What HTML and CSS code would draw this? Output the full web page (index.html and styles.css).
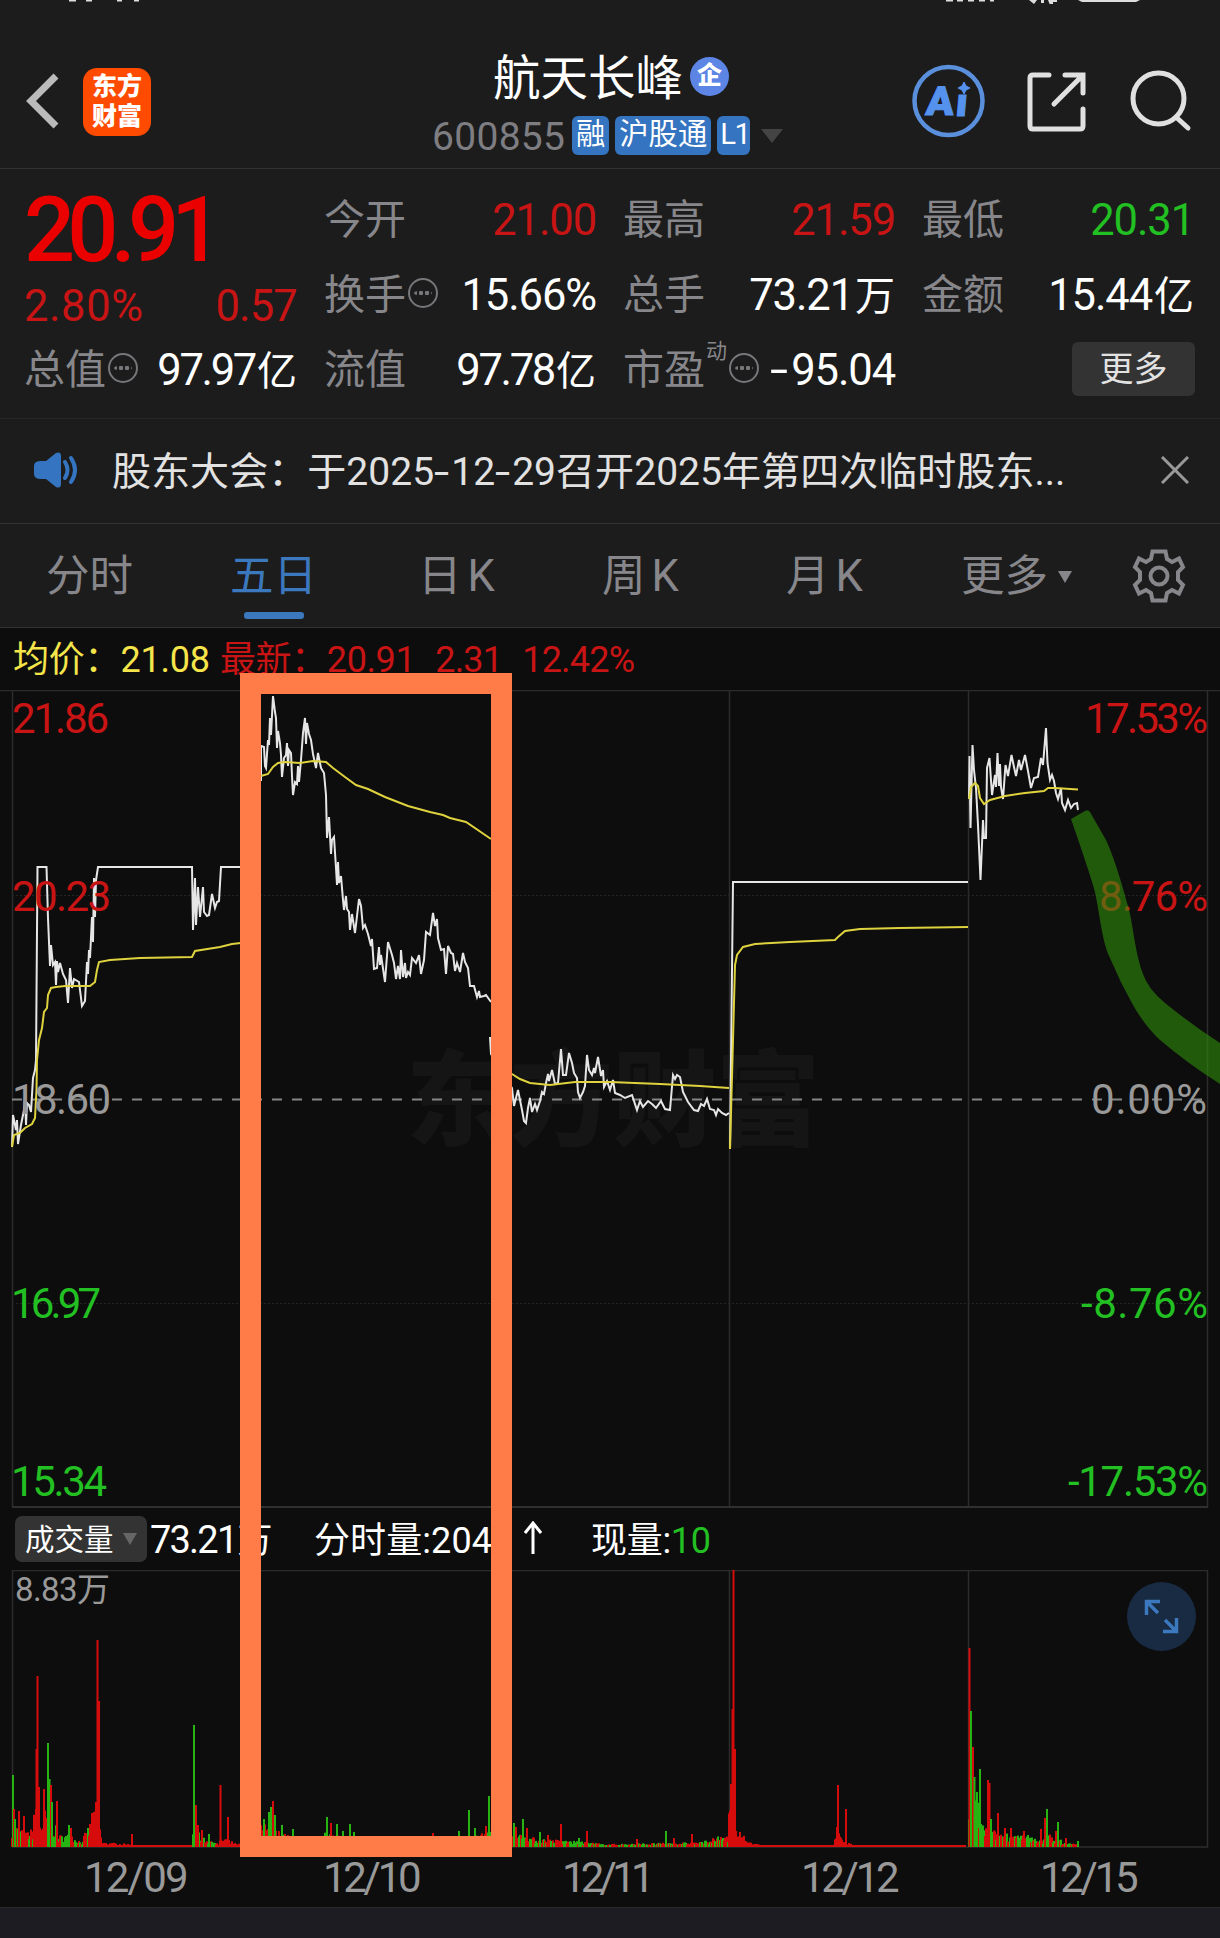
FILE: index.html
```
<!DOCTYPE html>
<html lang="zh-CN">
<head>
  <meta charset="UTF-8" />
  <meta name="viewport" content="width=device-width, initial-scale=1.0" />
  <title>航天长峰 600855</title>
  <link rel="stylesheet" href="styles.css">
</head>
<body>
  <div class="page">
    <svg class="status" viewBox="0 0 1220 4">
      <path d="M69 0h7v1.5h-7zM86 0h6v1.5h-6zM117 0h5v1.5h-5zM134 0h5v1.5h-5zM946 0h7v1.5h-7zM957 0h6v1.5h-6zM968 0h6v1.5h-6zM979 0h6v1.5h-6zM990 0h4v1.5h-4zM1029 0h8l-3 4zM1041 0h3v3h-3zM1048 0h9v2h-4v3h-3zM1078 0h62l-4 2h-54z"/>
    </svg>

    <header class="header">
      <svg class="back" viewBox="0 0 34 56"><path d="M30 3L5 28l25 25"/></svg>
      <div class="logo"><span>东方</span><span>财富</span></div>
      <div class="title">
        <div class="name">航天长峰<span class="corp">企</span></div>
        <div class="codes">
          <span class="code">600855</span>
          <span class="tag">融</span>
          <span class="tag">沪股通</span>
          <span class="tag tag-level">L1</span>
          <i class="arrow"></i>
        </div>
      </div>
      <svg class="tools" viewBox="900 60 300 84">
        <circle cx="948.500" cy="101" r="34" class="ai-ring"/>
        <g transform="translate(9 0) skewX(-5)">
          <text x="926" y="115" class="ai-text" textLength="28" lengthAdjust="spacingAndGlyphs">A</text>
          <text x="956" y="116" class="ai-text" textLength="12" lengthAdjust="spacingAndGlyphs">ı</text>
        </g>
        <path d="M964 82l2 4 4 2-4 2-2 4-2-4-4-2 4-2z" class="ai-star"/>
        <path d="M1049 75h-16q-3 0-3 3v48q0 3 3 3h47q3 0 3-3v-17M1065 75h18v18M1082 76l-28 28" class="line"/>
        <circle cx="1158.500" cy="98.500" r="25.500" class="line"/>
        <path d="M1176 117l12 11" class="line"/>
      </svg>
    </header>

    <section class="quote">
      <div class="col col-main">
        <div class="price">20.91</div>
        <div class="cell change"><span>2.80%</span><span>0.57</span></div>
        <div class="cell"><label>总值</label><i class="dots"></i><b class="tight">97.97<em>亿</em></b></div>
      </div>
      <div class="col">
        <div class="cell"><label>今开</label><b class="up">21.00</b></div>
        <div class="cell"><label>换手</label><i class="dots"></i><b>15.66%</b></div>
        <div class="cell"><label>流值</label><b class="tight">97.78<em>亿</em></b></div>
      </div>
      <div class="col">
        <div class="cell"><label>最高</label><b class="up">21.59</b></div>
        <div class="cell"><label>总手</label><b>73.21<em>万</em></b></div>
        <div class="cell"><label>市盈</label><sup>动</sup><i class="dots"></i><b class="pe"><span>-</span>95.04</b></div>
      </div>
      <div class="col">
        <div class="cell"><label>最低</label><b class="down">20.31</b></div>
        <div class="cell"><label>金额</label><b>15.44<em>亿</em></b></div>
        <div class="cell"><button class="more">更多</button></div>
      </div>
    </section>

    <section class="notice">
      <svg class="speaker" viewBox="0 0 44 36">
        <path d="M7 9h5L22 1q5-2 5 3v28q0 5-5 3L12 27H7q-7 0-7-5v-8q0-5 7-5z" class="cone"/>
        <path d="M31 10q5 8 0 16M37 6q8 12 0 24"/>
      </svg>
      <p>股东大会：于2025<s>-</s>12<s>-</s>29召开2025年第四次临时股东...</p>
      <svg class="close" viewBox="0 0 28 28"><path d="M1 1l26 26M27 1L1 27"/></svg>
    </section>

    <nav class="tabs">
      <a>分时</a>
      <a class="active">五日</a>
      <a class="tab-k">日<span>K</span></a>
      <a class="tab-k">周<span>K</span></a>
      <a class="tab-k">月<span>K</span></a>
      <a class="tab-more">更多<i></i></a>
      <svg class="gear" viewBox="-27 -27 54 54">
        <path d="M-6.500-24.500H6.500L8-17 13-14 20-17.500 24-9 19-4V4L24 9 20 17.500 13 14 8 17 6.500 24.500H-6.500L-8 17-13 14-20 17.500-24 9-19 4V-4L-24-9-20-17.500-13-14-8-17z"/>
        <circle r="8.500"/>
      </svg>
    </nav>

    <section class="chart">
      <div class="legend">
        <span class="avg">均价：<span>21.08</span></span>
        <span class="last last-price">最新：<span>20.91</span></span>
        <span class="last">2.31</span>
        <span class="last">12.42%</span>
      </div>

      <svg class="prices" viewBox="0 690 1220 818">
        <text x="406" y="1138" class="watermark" textLength="414">东方财富</text>
        <path d="M0 690.500H1220M12.500 691V1507M729.500 691V1507M968.500 691V1507M1207.500 691V1507" class="grid"/>
        <path d="M12 1507H1208" class="grid edge"/>
        <path d="M12 895.500H1208M12 1303.500H1208" class="grid dotted"/>
        <path d="M12 1099.500H1208" class="zero"/>
        <g id="lines"></g>
        <g class="axis">
          <text x="12" y="733" class="up" textLength="97">21.86</text>
          <text x="12" y="911" class="up" textLength="99">20.23</text>
          <text x="12" y="1114" textLength="99">18.60</text>
          <text x="11" y="1318" class="down" textLength="90">16.97</text>
          <text x="11" y="1496" class="down" textLength="96">15.34</text>
          <text x="1085" y="733" class="up" textLength="123">17.53%</text>
          <text x="1099" y="911" class="up" textLength="109">8.76%</text>
          <text x="1091" y="1114" textLength="116">0.00%</text>
          <text x="1081" y="1318" class="down" textLength="127">-8.76%</text>
          <text x="1068" y="1496" class="down" textLength="140">-17.53%</text>
        </g>
        <path class="brush" d="M1071 819Q1084 856 1093 885C1099 904 1101 940 1110 958Q1120 982 1133 1005Q1145 1026 1160 1040Q1187 1063 1220 1084V1043Q1192 1025 1165 1003Q1148 989 1143 974C1134 950 1133 920 1127 903Q1116 862 1106 840L1090 812Q1088 809 1085 811z"/>
      </svg>

      <div class="vol-bar">
        <button>成交量<i></i></button>
        <span class="total">73.21<em>万</em></span>
        <span class="minute">分时量:2045</span>
        <svg class="rise" viewBox="0 0 18 34"><path d="M9 33V2M1 12L9 2l8 10"/></svg>
        <span class="now">现量:<span class="down">10</span></span>
      </div>

      <svg class="volumes" viewBox="0 1570 1220 280">
        <path d="M12 1570.500H1208M12.500 1570V1847M729.500 1570V1847M968.500 1570V1847M1207.500 1570V1847M12 1847H1208" class="grid"/>
        <text x="15" y="1601" class="max" textLength="95">8.83万</text>
        <g id="bars"></g>
        <circle cx="1161.500" cy="1616.500" r="34.500" class="expand"/>
        <path d="M1146.500 1615V1601.500H1160M1147 1602L1158 1613M1163 1631.500H1176.500V1618M1176 1631L1165 1620" class="expand-line"/>
      </svg>

      <div class="dates">
        <span class="wide">12/09</span><span>12/10</span><span class="narrow">12/11</span><span>12/12</span><span>12/15</span>
      </div>
      <div class="frame"></div>
    </section>
    <footer></footer>
  </div>
  <script src="chart.js"></script>
</body>
</html>
```

FILE: styles.css
```
/* Reset & Base */
* { margin: 0; padding: 0; box-sizing: border-box; }
body { background: #1c1c1c; color: #fff; font-family: Roboto, "Noto Sans CJK SC", sans-serif; }
.page { width: 1220px; height: 1938px; overflow: hidden; display: flex; flex-direction: column; }
svg { display: block; flex: none; fill: none; }
button { border: none; font-family: inherit; }
em, i { font-style: normal; }
.up { color: #c81414; fill: #c81414; }
.down { color: #22c022; fill: #22c022; }

/* Header */
.status { width: 1220px; height: 4px; fill: #ddd; }
.header { height: 165px; display: flex; align-items: flex-start; border-bottom: 1px solid #333; }
.back { width: 34px; height: 56px; margin: 69px 0 0 26px; stroke: #bbb; stroke-width: 7; }
.logo { width: 68px; height: 68px; margin: 64px 0 0 23px; padding-top: 4px; border-radius: 14px; background: #ff4b00; font-size: 25px; font-weight: 900; line-height: 30px; text-align: center; }
.logo span { display: block; }
.title { width: 460px; margin: 38px 0 0 281px; }
.name { display: flex; align-items: center; height: 64px; padding-left: 61px; font-size: 47.5px; }
.corp { width: 39px; height: 39px; margin: 4px 0 0 7px; border-radius: 50%; background: #5c85e6; font-size: 25px; font-weight: 900; line-height: 37px; text-align: center; }
.codes { display: flex; align-items: center; gap: 6px; margin-top: 10px; height: 39px; }
.code { width: 134px; color: #7e7e82; font-size: 39px; letter-spacing: 0.3px; line-height: 43px; padding-top: 3px; }
.tag { height: 39px; padding: 0 4px; border-radius: 6px; background: #3474c0; font-size: 29.3px; line-height: 37px; }
.tag-level { width: 33px; padding-left: 3px; letter-spacing: -1.5px; }
.arrow { margin-left: 5px; border: 11px solid transparent; border-top: 14px solid #444; border-bottom: 0; }
.tools { width: 300px; height: 84px; margin: 56px 0 0 8px; }
.line { stroke: #e0e0e0; stroke-width: 5; stroke-linecap: round; }
.ai-ring { stroke: #5a8fdc; stroke-width: 4.5; }
.ai-text { fill: #5592ee; stroke: #5592ee; font-size: 40px; font-weight: 900; }
.ai-star { fill: #5592ee; stroke: #5592ee; }

/* Quote */
.quote { display: flex; height: 250px; padding: 15px 24px 0 24px; border-bottom: 1px solid #272727; gap: 27px; }
.col { width: 272px; }
.col-main { width: 273px; }
.cell { display: flex; align-items: center; height: 75px; font-size: 43.5px; letter-spacing: -1.1px; }
.cell label { color: #87878b; font-size: 41px; letter-spacing: 0; line-height: 60px; margin-top: -3px; }
.cell b { margin-left: auto; font-weight: 400; line-height: 60px; }
.cell b.tight { letter-spacing: -2.3px; }
.cell em { margin-left: 2px; font-size: 40px; letter-spacing: 0; }
.price { height: 75px; padding-top: 2px; color: #eb0000; font-size: 90px; font-weight: 500; line-height: 90px; letter-spacing: -7.800px; }
.change { position: relative; top: 10px; justify-content: space-between; color: #c81414; letter-spacing: 0.6px; }
.change span:last-child { letter-spacing: -0.800px; }
.dots { width: 30px; height: 30px; margin: -6px 0 0 2px; border: 2px solid #77777b; border-radius: 50%; background: radial-gradient(circle, #77777b 2px, transparent 2.500px) 4px 50% / 6px 6px repeat-x content-box; padding: 10px 4px; }
.cell sup { align-self: flex-start; margin-left: 1px; color: #87878b; font-size: 21px; letter-spacing: 0; }
.pe { display: flex; }
.pe span { width: 21px; transform: scaleX(1.5); transform-origin: 0 0; }
.more { width: 123px; height: 54px; margin: -5px -1px 0 auto; border-radius: 6px; background: #333; color: #e2e2e2; font-size: 34px; line-height: 50px; }

/* Notice */
.notice { display: flex; align-items: center; height: 105px; padding: 0 31px 2px 34px; border-bottom: 1px solid #333; }
.speaker { width: 44px; height: 36px; stroke: #3474c0; stroke-width: 4; stroke-linecap: round; }
.cone { fill: #3474c0; stroke: none; }
.notice p { margin: -4px 0 0 34px; color: #e2e2e2; font-size: 39px; letter-spacing: 0.05px; white-space: nowrap; }
.notice s { display: inline-block; width: 17px; text-decoration: none; transform: scaleX(1.4); transform-origin: 0 0; }
.close { width: 28px; height: 28px; margin-left: auto; stroke: #999; stroke-width: 3; }

/* Tabs */
.tabs { display: flex; align-items: center; height: 104px; padding-left: 46px; border-bottom: 1px solid #333; color: #87878b; font-size: 43.500px; }
.tabs a { position: relative; width: 184px; line-height: 98px; padding-top: 3px; }
.tabs a span { margin-left: 6px; }
.tabs .tab-k { left: 4px; }
.tabs .active { color: #3b78bd; }
.tabs .active::after { content: ""; position: absolute; left: 14px; bottom: 7px; width: 60px; height: 7px; border-radius: 3px; background: #3b78bd; }
.tabs .tab-more { width: 170px; margin-left: -5px; }
.tab-more i { display: inline-block; margin: 0 0 8px 10px; border: 7.500px solid transparent; border-top: 12px solid #87878b; border-bottom: 0; }
.gear { width: 54px; height: 54px; margin: 1px 0 0 1px; stroke: #87878b; stroke-width: 4; }

/* Chart */
.chart { position: relative; height: 1280px; background: #0d0d0d; }
.legend { display: flex; height: 62px; padding: 2px 0 0 13px; font-size: 36px; line-height: 60px; color: #c81414; }
.legend span { white-space: pre; }
.avg { width: 207px; color: #f5e54a; letter-spacing: -0.2px; }
.last { margin-right: 20px; letter-spacing: -0.8px; }
.last-price { letter-spacing: -0.4px; }
.prices { width: 1220px; height: 818px; }
.grid { stroke: #2c2c2c; stroke-width: 1.500; }
.edge { stroke-width: 2; stroke: #303030; }
.dotted { stroke-width: 1; stroke-dasharray: 2 2; stroke: #262626; }
.zero { stroke: #858585; stroke-width: 2; stroke-dasharray: 10 10; }
.watermark { fill: #151515; font: 900 104px "Noto Sans CJK SC", sans-serif; }
.price-line { stroke: #e6e6e6; stroke-width: 2; }
.avg-line { stroke: #ded23e; stroke-width: 2; }
.axis { font-size: 42px; fill: #999; }
.brush { fill: #32920c; fill-opacity: 0.58; }
.vol-bar { display: flex; align-items: center; height: 62px; padding: 0 0 2px 15px; font-size: 38px; }
.vol-bar button { display: flex; align-items: center; width: 132px; height: 46px; margin-top: 2px; padding: 0 0 3px 10px; border-radius: 7px; background: #333; color: #fff; font-size: 29.500px; }
.vol-bar button i { margin: 3px 0 0 9px; border: 7.500px solid transparent; border-top: 12px solid #666; border-bottom: 0; }
.vol-bar em { font-size: 35px; margin-left: 1px; }
.total { width: 164px; margin-left: 3px; letter-spacing: -1.800px; }
.minute { width: 210px; font-size: 36px; letter-spacing: 0.1px; margin-top: -2px; }
.rise { width: 18px; height: 34px; stroke: #fff; stroke-width: 3; }
.now { margin: -2px 0 0 49px; font-size: 36px; letter-spacing: -0.3px; }
.volumes { width: 1220px; height: 280px; }
.max { font-size: 33px; fill: #999; }
.expand { fill: #182b42; }
.expand-line { stroke: #3b78bd; stroke-width: 3.500; }
.dates { display: flex; padding-left: 12px; color: #999; font-size: 42px; line-height: 56px; letter-spacing: -3.300px; }
.dates span { width: 239px; padding-left: 72px; }
.dates .wide { letter-spacing: -1.800px; }
.dates .narrow { letter-spacing: -4.800px; }
.frame { position: absolute; left: 239.500px; top: 45px; width: 272px; height: 1184px; border: 21.500px solid #ff7b47; }
footer { height: 31px; border-top: 1px solid #2a2a2c; background: #1c1c22; }
```

FILE: chart.js
```
const SVG = 'http://www.w3.org/2000/svg';

// price and average lines, one entry per trading day
const prices = [
  '12,1147 13,1115 16,1130 17,1120 18,1144 21,1125 24,1110 25,1097 26,1125 27,1103 29,1105 31,1112 33,1078 35,1070 36,1060 37.5,867 46.5,867 48,918 50,966 51,945 53,965 55,962 56,985 57,961 58,972 60,963 63,974 66,980 68,1003 70,968 72,988 74,979 79,982 82,1006 85,1001 87,962 88,974 89,950 90,958 92,917 93,942 94,878 95,917 96,880 98,867 192,867 193,930 195,878 196,925 198,887 200,917 203,887 204,912 207,916 209,915 212,894 215,908 217,902 219,901 221,867 241,867',
  '261,781 261,746 264,747 265,766 266,768 268,740 269,745 270,718 271,735 273,696 275,712 276,718 277,748 278,731 280,743 281,755 282,777 284,758 286,755 287,743 288,766 289,750 291,753 292,776 293,795 295,782 297,784 298,766 299,782 301,760 303,733 305,718 306,744 307,723 309,734 311,740 313,754 316,768 318,753 321,768 324,773 326,795 327,838 329,817 331,854 332,840 334,837 336,868 337,885 338,862 339,883 341,876 343,900 344,910 346,896 347,909 349,912 350,930 352,914 355,933 359,899 361,906 363,928 365,925 368,934 371,946 372,939 374,969 377,968 379,947 380,965 381,955 385,982 388,942 392,955 394,963 396,979 398,966 400,979 401,950 403,977 405,963 406,978 408,972 410,975 412,958 416,963 419,955 421,974 424,960 426,932 430,935 433,913 435,926 437,919 438,938 441,950 444,949 446,974 448,946 451,953 453,954 455,971 457,963 460,972 463,953 465,962 468,968 470,986 474,986 477,997 479,991 480,997 484,996 486,995 491,1002',
  '490,1037 491,1054 512,1088 514,1106 518,1090 522,1110 524,1121 526,1123 528,1108 530,1098 532,1112 535,1104 537,1110 540,1101 542,1092 544,1094 546,1083 548,1074 549,1081 552,1070 555,1084 558,1083 561,1049 563,1075 566,1075 569,1053 572,1063 574,1073 577,1078 578,1092 580,1098 583,1092 585,1086 587,1055 589,1070 592,1075 594,1068 595,1073 598,1057 601,1076 603,1070 604,1087 607,1081 610,1090 613,1080 615,1093 620,1095 625,1098 632,1095 637,1110 640,1101 643,1107 648,1101 652,1104 656,1108 661,1101 665,1109 670,1110 673,1075 675,1079 677,1075 680,1077 683,1092 688,1102 694,1110 698,1111 701,1104 704,1106 707,1099 710,1109 714,1110 716,1115 718,1109 722,1113 726,1115 729,1113',
  '730,1149 733,882 968,882',
  '969,799 969.5,756 970.5,828 972.5,745 974,770 976,788 978,825 980.5,880 983,820 984,838 986,838 987,768 989.5,758 992,795 995,775 996,787 997.5,753 999,786 1000,764 1001,787 1003,799 1005.5,765 1008,776 1011.5,755 1014,767 1016,776 1019,760 1021,770 1025,755 1028,771 1031,788 1034,778 1038,777 1041,758 1043,765 1046,728 1047.5,763 1050,780 1052,775 1054,781 1056,793 1058,799 1061,788 1062,803 1065,810 1068,800 1071,808 1074,804 1077,803 1078,810'
];
const averages = [
  '12,1147 14,1135 20,1133 25,1128 32,1124 35,1118 36.5,1090 37,1060 39,1040 42,1028 44,1012 47,1008 48,995 51,988 56,987 65,986 90,986 95,982 97,970 99,962 110,960 140,958 192,957 195,951 220,947 232,944 241,943',
  '261,776 268,774 273,767 278,763 285,762 300,763 313,761 326,762 333,768 345,777 356,785 368,789 385,797 408,806 430,812 443,815 450,818 466,822 491,839',
  '493,1037 494,1065 512,1074 520,1079 530,1083 550,1085 575,1082 610,1082 660,1084 700,1086 729,1088',
  '730,1149 733,1040 735,965 737,955 743,947 755,944 790,942 835,940 838,937 845,931 860,929 900,928 968,927',
  '969,799 971,787 975,783 978,786 980,798 984,804 990,800 1005,796 1025,793 1044,791 1048,788 1055,788 1078,789.5'
];

const lines = document.getElementById('lines');
function addLine(points, cls) {
  const el = document.createElementNS(SVG, 'polyline');
  el.setAttribute('points', points);
  el.setAttribute('class', cls);
  lines.appendChild(el);
}
prices.forEach(p => addLine(p, 'price-line'));
averages.forEach(p => addLine(p, 'avg-line'));

// volume: [from, to, start level, end level, share of green bars]
const levels = [
  [12, 24, 26, 16, 0.5], [24, 34, 14, 20, 0.3], [34, 45, 45, 20, 0], [45, 57, 40, 20, 0.5],
  [57, 74, 12, 14, 0.6], [74, 84, 10, 5, 0.7], [84, 97, 12, 40, 0.4], [97, 102, 40, 8, 0], [102, 134, 5, 3, 0],
  [134, 193, 2, 2, 0], [193, 206, 20, 10, 0.5], [206, 220, 8, 4, 0.6], [220, 240, 10, 4, 0],
  [261, 290, 25, 12, 0.6], [290, 325, 10, 8, 0.4], [325, 355, 16, 8, 0.6], [355, 470, 7, 7, 0.2], [470, 490, 12, 18, 0.6],
  [490, 540, 22, 8, 0.6], [540, 600, 9, 4, 0.6], [600, 700, 3, 5, 0.5], [700, 729, 5, 14, 0.5],
  [729, 737, 40, 28, 0], [737, 746, 18, 10, 0], [746, 760, 6, 2, 0], [760, 835, 2, 2, 0], [835, 845, 18, 8, 0], [845, 852, 6, 3, 0], [852, 966, 2, 2, 0],
  [969, 982, 60, 40, 0.7], [982, 994, 24, 18, 0.4], [994, 1044, 17, 8, 0.5], [1044, 1062, 16, 7, 0.6], [1062, 1078, 5, 3, 0.4]
];
const spikes = [
  [13, 72, 'g'], [14, 38, 'r'], [15, 28, 'g'], [19, 36, 'r'], [24, 31, 'r'], [36.5, 98, 'r'], [37.5, 171, 'r'], [39, 60, 'r'],
  [44, 58, 'r'], [48, 104, 'g'], [49.5, 68, 'g'], [51, 62, 'r'], [52, 45, 'g'], [57, 46, 'r'], [69, 22, 'g'], [71, 19, 'r'],
  [92, 34, 'r'], [94, 35, 'r'], [96, 45, 'r'], [97.5, 207, 'r'], [99, 146, 'r'], [132, 13, 'r'], [194, 122, 'g'], [196, 42, 'r'],
  [198, 22, 'r'], [202, 17, 'r'], [209, 13, 'g'], [220.5, 62, 'r'], [228, 30, 'r'],
  [264, 28, 'g'], [269, 35, 'g'], [271, 40, 'g'], [273, 46, 'r'], [275, 32, 'g'], [282, 22, 'g'], [293, 18, 'g'], [327, 30, 'g'],
  [331, 24, 'r'], [337, 23, 'g'], [343, 16, 'g'], [350, 23, 'g'], [354, 15, 'g'], [433, 14, 'r'], [459, 16, 'g'], [469, 37, 'g'],
  [475, 19, 'g'], [486, 21, 'r'], [489, 51, 'g'], [514, 24, 'g'], [516, 20, 'r'], [523, 28, 'g'], [527, 19, 'r'], [540, 15, 'g'],
  [548, 12, 'r'], [561, 23, 'r'], [579, 9, 'g'], [587, 16, 'r'], [637, 8, 'r'], [666, 16, 'g'], [674, 9, 'r'], [692, 13, 'r'],
  [731, 63, 'r'], [732.5, 138, 'r'], [733.5, 277, 'r'], [735, 98, 'r'], [837, 20, 'r'], [838, 62, 'r'], [846, 38, 'r'],
  [969.5, 199, 'r'], [971, 136, 'g'], [973, 100, 'r'], [974.5, 70, 'g'], [977, 55, 'g'], [980, 78, 'g'], [988, 67, 'r'],
  [989.5, 64, 'r'], [991, 28, 'g'], [998, 34, 'r'], [1005, 19, 'r'], [1011, 19, 'r'], [1024, 16, 'r'], [1028, 12, 'g'],
  [1041, 18, 'r'], [1045, 29, 'r'], [1047, 38, 'g'], [1056, 16, 'r'], [1058, 25, 'g'], [1066, 9, 'r'], [1078, 6, 'g']
];

const bars = document.getElementById('bars');
function addBar(x, h, color) {
  const el = document.createElementNS(SVG, 'rect');
  el.setAttribute('x', x - 1);
  el.setAttribute('y', 1847 - h);
  el.setAttribute('width', 2);
  el.setAttribute('height', h);
  el.setAttribute('fill', color === 'g' ? '#27b413' : '#d60c0c');
  bars.appendChild(el);
}

let seed = 7;
function rand() {
  seed = (seed * 16807) % 2147483647;
  return seed / 2147483647;
}
levels.forEach(([from, to, a, b, green]) => {
  for (let x = from; x < to; x++) {
    const level = a + (b - a) * (x - from) / (to - from);
    const h = level < 3 ? level : Math.max(2, level * (0.35 + 0.65 * rand()));
    addBar(x, h, rand() < green ? 'g' : 'r');
  }
});
spikes.forEach(s => addBar(...s));
```
